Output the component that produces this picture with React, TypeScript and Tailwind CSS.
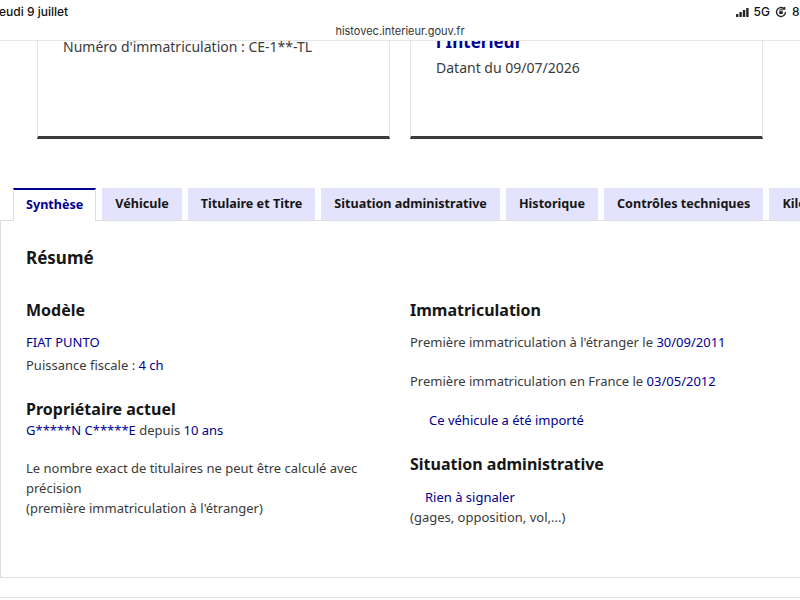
const blue = "text-[#000091]"

function SignalBars() {
  return (
    <svg width="13" height="9" viewBox="0 0 13 9" className="fill-[#222]">
      <rect x="0" y="6" width="2.4" height="3" rx="0.5" />
      <rect x="3.4" y="4" width="2.4" height="5" rx="0.5" />
      <rect x="6.8" y="2" width="2.4" height="7" rx="0.5" />
      <rect x="10.2" y="0" width="2.4" height="9" rx="0.5" />
    </svg>
  )
}

function RotationLock() {
  return (
    <svg width="12" height="12" viewBox="0 0 12 12" fill="none" stroke="#222" strokeWidth="1.4">
      <path d="M10.5 6a4.5 4.5 0 1 1-1.6-3.4" />
      <path d="M9.6 0.9v2.2H7.4" />
      <rect x="4.2" y="5.2" width="3.6" height="2.8" rx="0.4" fill="#222" stroke="none" />
      <path d="M4.9 5.3V4.4a1.1 1.1 0 0 1 2.2 0v0.9" strokeWidth="1" />
    </svg>
  )
}

const tabs = [
  "Synthèse",
  "Véhicule",
  "Titulaire et Titre",
  "Situation administrative",
  "Historique",
  "Contrôles techniques",
  "Kilométrage",
]

export default function App() {
  return (
    <div className="h-[600px] w-[800px] overflow-hidden bg-white font-['Noto_Sans',sans-serif] text-[13px] text-[#3a3a3a]">
      {/* status bar + address */}
      <div className="relative z-10 h-[41px] border-b border-[#e6e6e6] bg-white/90 font-['Inter',sans-serif]">
        <div className="flex h-[24px] items-center justify-between text-[12px] font-medium text-[#111]">
          <span className="-ml-[1px]">eudi 9 juillet</span>
          <div className="flex items-center gap-[5px] whitespace-nowrap">
            <SignalBars />
            <span>5G</span>
            <RotationLock />
            <span className="w-[8px] overflow-hidden">80%</span>
          </div>
        </div>
        <div className="text-center text-[11px] leading-[14px] text-[#333]">histovec.interieur.gouv.fr</div>
      </div>

      {/* cards */}
      <div className="-mt-px flex gap-[20px] pl-[37px]">
        <div className="h-[99px] w-[353px] overflow-hidden border-x border-b-[3px] border-x-[#e5e5e5] border-b-[#3a3a3a] px-[25px]">
          <p className="-mt-[3px] text-[14px] leading-[20px] text-[#3a3a3a]">Numéro d'immatriculation : CE-1**-TL</p>
        </div>
        <div className="h-[99px] w-[353px] overflow-hidden border-x border-b-[3px] border-x-[#e5e5e5] border-b-[#3a3a3a] px-[25px]">
          <p className={`-mt-[10px] text-[17px] font-bold leading-[24px] ${blue}`}>l'Intérieur</p>
          <p className="mt-[4px] text-[14px] leading-[20px]">Datant du 09/07/2026</p>
        </div>
      </div>

      {/* tabs */}
      <div className="mt-[49px] flex gap-[6px] whitespace-nowrap pl-[13px] text-[12.6px]">
        {tabs.map((t, i) =>
          i === 0 ? (
            <div
              key={t}
              className={`relative z-10 -mb-px flex h-[33px] shrink-0 items-center border-x border-t-2 border-x-[#dddddd] border-t-[#000091] bg-white px-[12px] pb-[1px] font-bold ${blue}`}
            >
              {t}
            </div>
          ) : (
            <div key={t} className="flex h-[32px] shrink-0 items-center bg-[#e3e3fd] px-[13px] font-bold text-[#161616]">
              {t}
            </div>
          )
        )}
      </div>

      {/* panel */}
      <div className="h-[358px] w-[801px] border border-[#dddddd] pl-[25px]">
        <h2 className="pt-[25px] text-[17px] font-bold leading-[24px] text-[#161616]">Résumé</h2>
        <div className="mt-[28px] grid grid-cols-[384px_1fr]">
          <div>
            <h3 className="text-[16px] font-bold leading-[24px] text-[#161616]">Modèle</h3>
            <p className={`mt-[10px] leading-[20px] ${blue}`}>FIAT PUNTO</p>
            <p className="mt-[3px] leading-[20px]">
              Puissance fiscale : <span className={blue}>4 ch</span>
            </p>
            <h3 className="mt-[22px] text-[16px] font-bold leading-[24px] text-[#161616]">Propriétaire actuel</h3>
            <p className={`-mt-[1px] leading-[20px] ${blue}`}>
              G*****N C*****E <span className="text-[#3a3a3a]">depuis</span> 10 ans
            </p>
            <p className="mt-[18px] w-[350px] leading-[20px]">
              Le nombre exact de titulaires ne peut être calculé avec précision
              <br />
              (première immatriculation à l'étranger)
            </p>
          </div>
          <div>
            <h3 className="text-[16px] font-bold leading-[24px] text-[#161616]">Immatriculation</h3>
            <p className="mt-[10px] leading-[20px]">
              Première immatriculation à l'étranger le <span className={blue}>30/09/2011</span>
            </p>
            <p className="mt-[19px] leading-[20px]">
              Première immatriculation en France le <span className={blue}>03/05/2012</span>
            </p>
            <p className={`mt-[19px] pl-[19px] leading-[20px] ${blue}`}>Ce véhicule a été importé</p>
            <h3 className="mt-[22px] text-[16px] font-bold leading-[24px] text-[#161616]">Situation administrative</h3>
            <p className={`mt-[11px] pl-[15px] leading-[20px] ${blue}`}>Rien à signaler</p>
            <p className="leading-[20px]">(gages, opposition, vol,...)</p>
          </div>
        </div>
      </div>
      <div className="h-[20px] border-b border-[#e5e5e5]" />
    </div>
  )
}
